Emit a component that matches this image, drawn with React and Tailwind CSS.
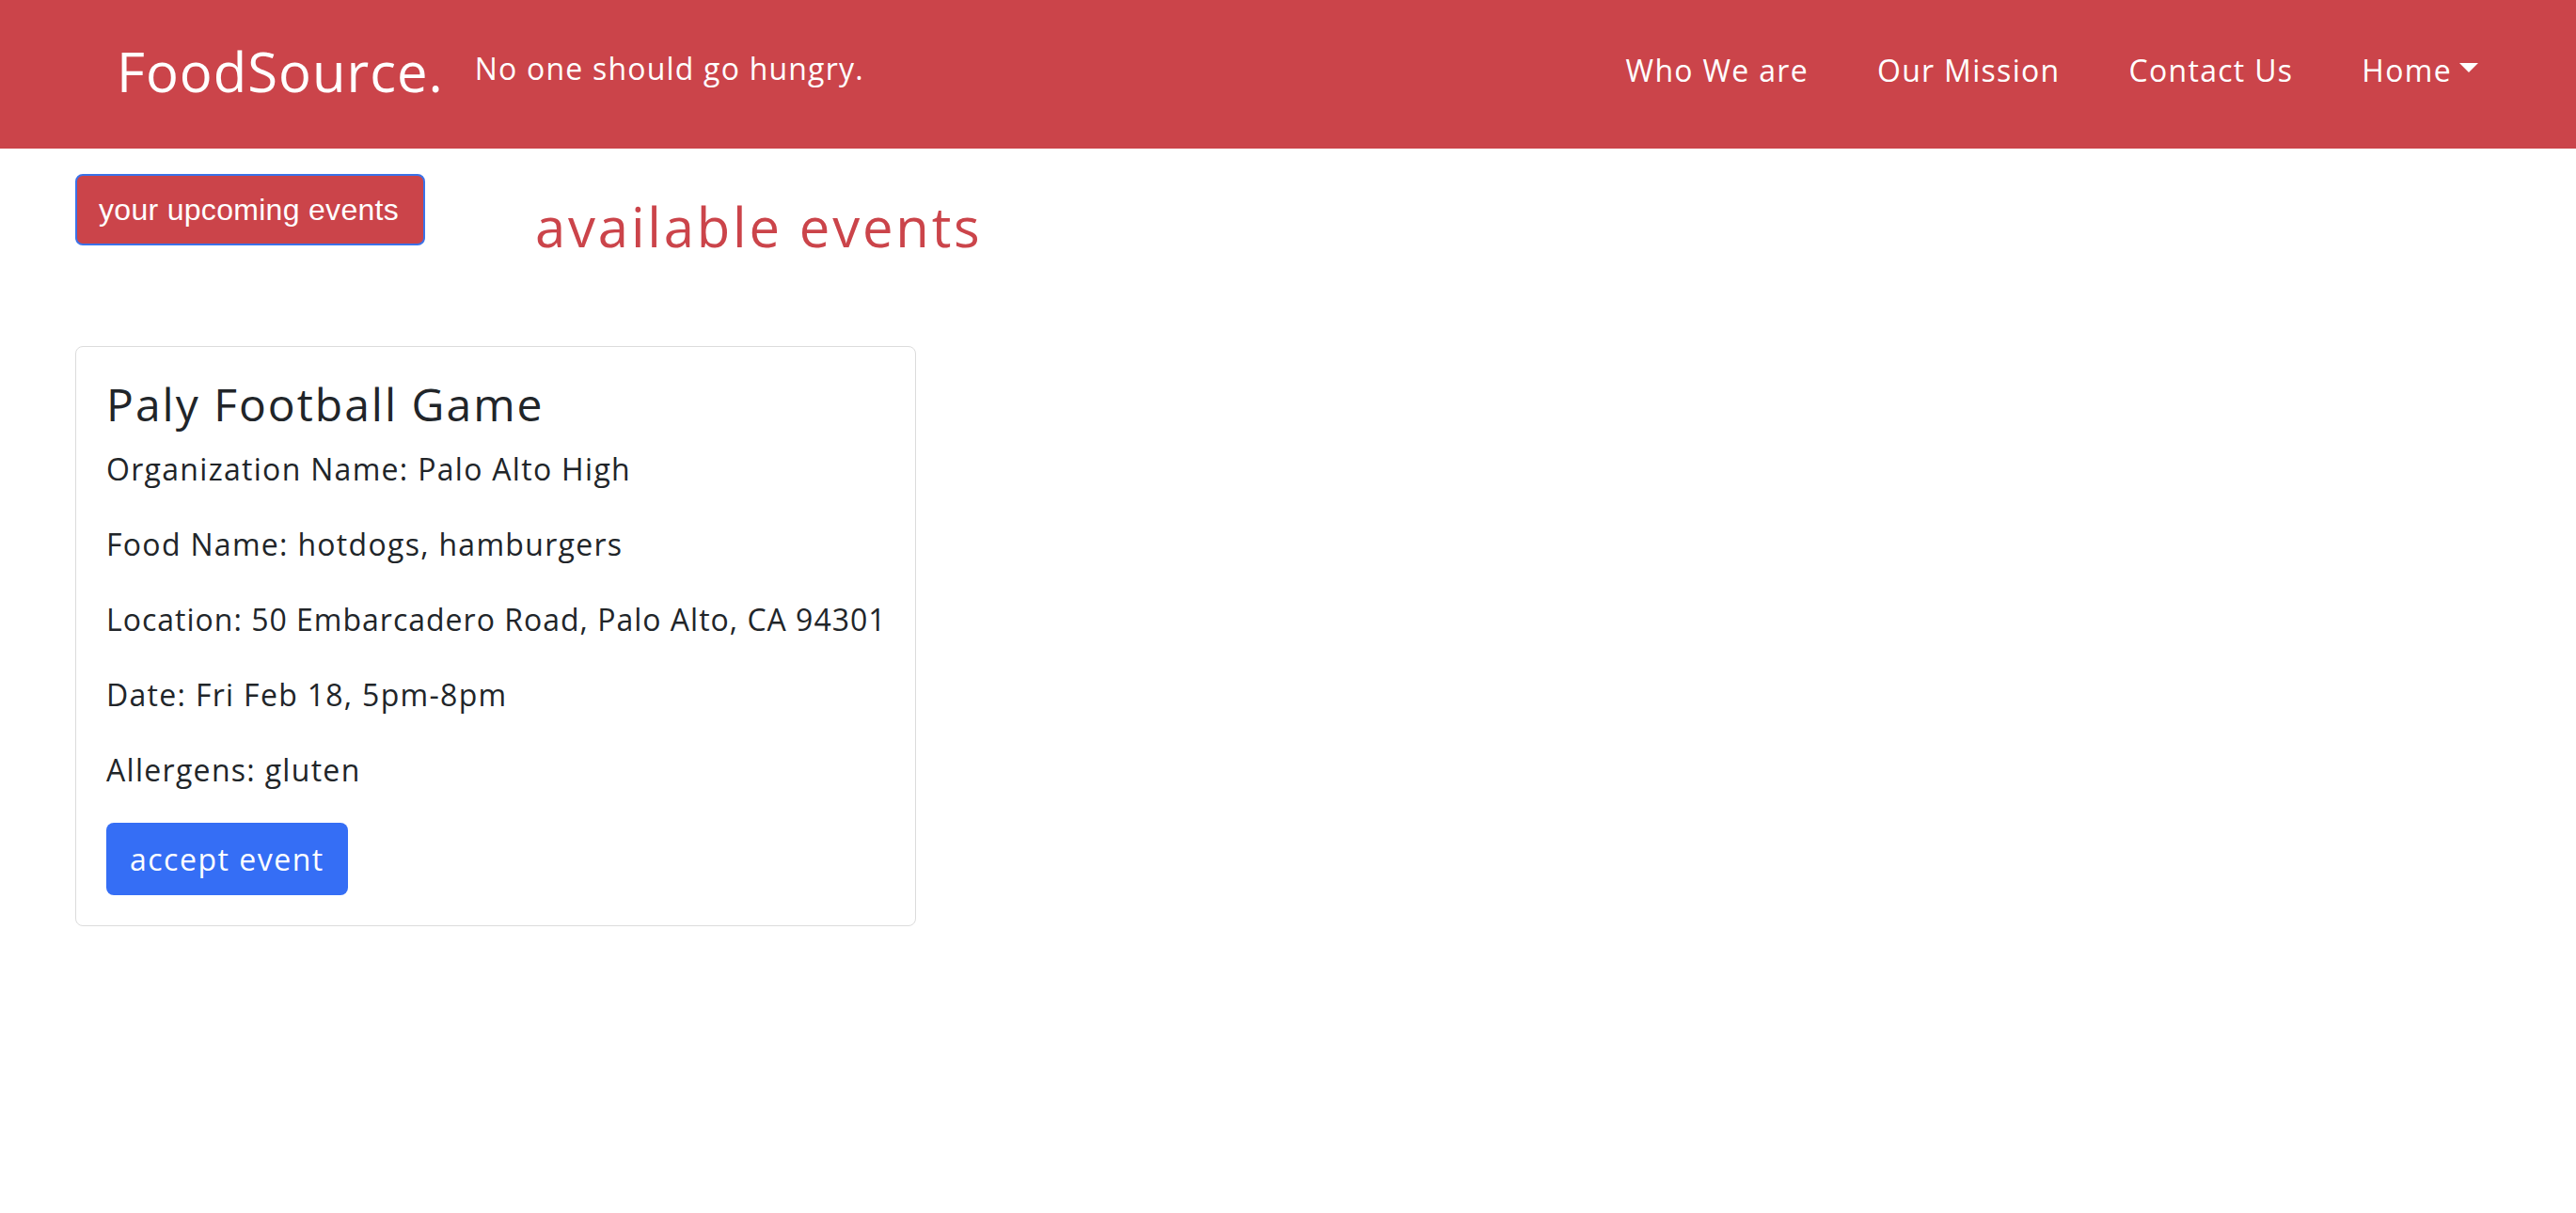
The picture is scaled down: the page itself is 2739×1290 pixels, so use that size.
import React from 'react';

const NavLink = ({ children }) => (
    <a href="#" className="text-white text-[32px] leading-[48px] tracking-[1.3px] no-underline">
        {children}
    </a>
);

const InfoLine = ({ children, tight }) => (
    <p className={(tight ? 'tracking-[1px]' : 'tracking-[1.3px]') + ' text-[32px] leading-[48px] whitespace-nowrap mb-[32px] text-[#212529]'}>
        {children}
    </p>
);

const App = () => {
    return (
        <div className="min-h-screen bg-white font-['Open_Sans',sans-serif]">
            <nav className="h-[158px] bg-[#cb444a] flex items-center justify-between pl-[124px] pr-[104px]">
                <div className="flex items-center">
                    <span className="text-white text-[58px] leading-[70px] tracking-[1px] -mt-[6px]">FoodSource.</span>
                    <span className="text-white text-[32px] leading-[48px] tracking-[1.2px] ml-[33px] -mt-[12px]">No one should go hungry.</span>
                </div>
                <div className="flex items-center gap-[73px] -mt-[8px]">
                    <NavLink>Who We are</NavLink>
                    <NavLink>Our Mission</NavLink>
                    <NavLink>Contact Us</NavLink>
                    <a href="#" className="flex items-center text-white text-[32px] leading-[48px] tracking-[1.3px]">
                        Home
                        <span className="ml-[8px] -mt-[6px] w-0 h-0 border-l-[10px] border-r-[10px] border-t-[10px] border-l-transparent border-r-transparent border-t-white" />
                    </a>
                </div>
            </nav>

            <main className="px-[80px]">
                <div className="flex items-start">
                    <button
                        type="button"
                        className="mt-[27px] h-[76px] pl-[23px] pr-[26px] bg-[#cb444a] text-white text-[32px] leading-none tracking-[0.3px] font-['Liberation_Sans',sans-serif] border-2 border-[#3b72e8] rounded-[8px]"
                    >
                        your upcoming events
                    </button>
                    <h2 className="ml-[117px] mt-[48px] text-[#cb444a] text-[58px] leading-[70px] tracking-[2.8px]">available events</h2>
                </div>

                <div className="mt-[92px] w-[894px] border border-[#dcdcdc] rounded-[8px] p-[32px]">
                    <h5 className="text-[48px] leading-[58px] tracking-[2px] mb-[16px] text-[#212529]">Paly Football Game</h5>
                    <InfoLine>Organization Name: Palo Alto High</InfoLine>
                    <InfoLine>Food Name: hotdogs, hamburgers</InfoLine>
                    <InfoLine tight>Location: 50 Embarcadero Road, Palo Alto, CA 94301</InfoLine>
                    <InfoLine>Date: Fri Feb 18, 5pm-8pm</InfoLine>
                    <InfoLine>Allergens: gluten</InfoLine>
                    <button
                        type="button"
                        className="h-[77px] px-[25px] bg-[#356ef5] text-white text-[32px] leading-[48px] tracking-[1.5px] rounded-[8px]"
                    >
                        accept event
                    </button>
                </div>
            </main>
        </div>
    );
};

export default App;
